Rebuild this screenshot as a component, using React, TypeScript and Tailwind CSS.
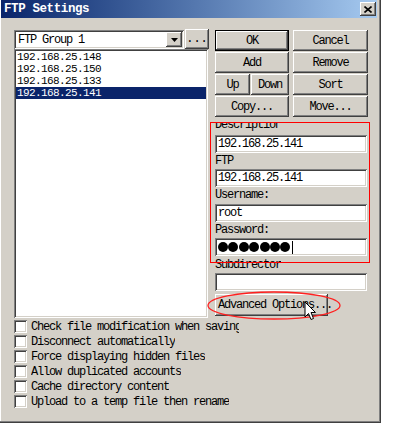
import React from 'react';

const sunken =
    'bg-white shadow-[inset_1px_1px_0_#808080,inset_-1px_-1px_0_#ffffff,inset_2px_2px_0_#404040,inset_-2px_-2px_0_#d4d0c8]';
const raised =
    'bg-[#d4d0c8] shadow-[inset_-1px_-1px_0_#404040,inset_1px_1px_0_#ffffff,inset_-2px_-2px_0_#808080]';

function Btn({ children, className = '' }: { children: React.ReactNode; className?: string }) {
    return (
        <div className={`${raised} flex items-center justify-center h-[21px] leading-[12px] whitespace-nowrap ${className}`}>
            {children}
        </div>
    );
}

function Field({ children }: { children?: React.ReactNode }) {
    return (
        <div className={`${sunken} h-[18px] w-[152px] flex items-center pl-[3px] leading-[12px] overflow-hidden`}>
            {children}
        </div>
    );
}

function Label({ text, h }: { text: string; h: string }) {
    return <div className={`${h} pt-[2px] leading-[12px] whitespace-nowrap`}>{text}</div>;
}

const hosts = ['192.168.25.148', '192.168.25.150', '192.168.25.133', '192.168.25.141'];

const options = [
    'Check file modification when saving',
    'Disconnect automatically',
    'Force displaying hidden files',
    'Allow duplicated accounts',
    'Cache directory content',
    'Upload to a temp file then rename',
];

export default function App() {
    return (
        <div className="w-[396px] h-[425px] bg-white overflow-hidden font-['Liberation_Mono',monospace] text-[12px] tracking-[-1.2px] text-black">
            <div className="relative w-[381px] h-[423px] bg-[#d4d0c8] shadow-[inset_-1px_-1px_0_#404040,inset_-2px_-2px_0_#808080,inset_1px_0_0_#ffffff]">
                {/* title bar */}
                <div className="ml-[1px] mr-[4px] h-[18px] flex items-center justify-between bg-linear-to-r from-[#0a246a] to-[#a6caf0]">
                    <span className="pl-[3px] text-white font-bold text-[12.5px] tracking-[-0.4px] leading-[14px]">FTP Settings</span>
                    <div className={`${raised} w-[16px] h-[14px] mr-[1px] flex items-center justify-center`}>
                        <svg width="8" height="7" viewBox="0 0 8 7">
                            <path d="M0.5 0.5 L7.5 6.5 M7.5 0.5 L0.5 6.5" stroke="#000" strokeWidth="1.6" />
                        </svg>
                    </div>
                </div>

                <div className="pl-[14px] pt-[11px] flex items-start gap-[6px]">
                    {/* left column */}
                    <div className="w-[195px] flex flex-col">
                        <div className="flex items-start h-[20px]">
                            <div className={`${sunken} mt-[1px] w-[170px] h-[19px] flex items-center pl-[4px] pr-[2px] justify-between`}>
                                <span className="leading-[12px]">FTP Group 1</span>
                                <div className={`${raised} w-[16px] h-[15px] flex items-center justify-center`}>
                                    <svg width="7" height="4" viewBox="0 0 7 4">
                                        <path d="M0 0 H7 L3.5 4 Z" fill="#000" />
                                    </svg>
                                </div>
                            </div>
                            <Btn className="ml-[1px] w-[24px] !h-[20px]">
                                <span className="tracking-[0px]">...</span>
                            </Btn>
                        </div>
                        <div className={`${sunken} w-[194px] h-[269px] pt-[2px] px-[2px]`}>
                            {hosts.map((h, i) => (
                                <div
                                    key={h}
                                    className={`h-[12px] leading-[12px] text-[11px] tracking-[-0.6px] pl-[1px] ${i === 3 ? 'bg-[#0a246a] text-white' : ''}`}
                                >
                                    {h}
                                </div>
                            ))}
                        </div>
                    </div>

                    {/* right column */}
                    <div className="w-[153px] pt-[1px] flex flex-col">
                        <div className="grid grid-cols-[74px_75px] gap-x-[4px] gap-y-[1px]">
                            <div className="border border-black h-[21px]">
                                <Btn className="!h-[19px]">OK</Btn>
                            </div>
                            <Btn>Cancel</Btn>
                            <Btn>Add</Btn>
                            <Btn>Remove</Btn>
                            <div className="flex gap-[1px]">
                                <Btn className="w-[35px]">Up</Btn>
                                <Btn className="w-[38px]">Down</Btn>
                            </div>
                            <Btn>Sort</Btn>
                            <Btn>Copy...</Btn>
                            <Btn>Move...</Btn>
                        </div>

                        <div className="mt-[5px] h-[13px] w-[63px] overflow-hidden">
                            <div className="mt-[-3px] leading-[12px] whitespace-nowrap">Description</div>
                        </div>
                        <Field>192.168.25.141</Field>
                        <Label text="FTP" h="h-[16px]" />
                        <Field>192.168.25.141</Field>
                        <Label text="Username:" h="h-[17px]" />
                        <Field>root</Field>
                        <Label text="Password:" h="h-[16px]" />
                        <Field>
                            <div className="flex items-center gap-[0.4px]">
                                {Array.from({ length: 7 }).map((_, i) => (
                                    <span key={i} className="w-[10px] h-[10px] rounded-full bg-black" />
                                ))}
                                <span className="ml-[1px] w-[1px] h-[13px] bg-black" />
                            </div>
                        </Field>
                        <div className="h-[17px] w-[66px] overflow-hidden pt-[3px] leading-[12px] whitespace-nowrap">Subdirectory</div>
                        <Field />
                        <Btn className="mt-[3px] w-[113px] !h-[22px] !justify-start pl-[3px]">Advanced Options...</Btn>
                    </div>
                </div>

                {/* options */}
                <div className="pl-[14px] mt-[2px] flex flex-col gap-[2px]">
                    {options.map((o, i) => (
                        <div key={o} className="h-[13px] flex items-center gap-[4px]">
                            <span className={`${sunken} w-[13px] h-[13px] shrink-0`} />
                            <span className={`leading-[12px] whitespace-nowrap overflow-hidden ${i === 0 ? 'w-[208px]' : ''}`}>{o}</span>
                        </div>
                    ))}
                </div>

                {/* annotations */}
                <div className="absolute left-[210px] top-[122px] w-[160px] h-[141px] border border-[#ff0000] pointer-events-none" />
                <svg className="absolute left-[206px] top-[290px]" width="136" height="31" viewBox="0 0 136 31">
                    <ellipse cx="68" cy="15.5" rx="66" ry="13.5" fill="none" stroke="#ff2020" strokeWidth="1.3" />
                </svg>
                <svg className="absolute left-[304px] top-[301px]" width="13" height="21" viewBox="0 0 13 21">
                    <path
                        d="M1 1 L1 16 L4.5 12.5 L7 18.5 L9.5 17.5 L7 11.5 L11.5 11.5 Z"
                        fill="#fff"
                        stroke="#000"
                        strokeWidth="1"
                        strokeLinejoin="miter"
                    />
                </svg>
            </div>
        </div>
    );
}
